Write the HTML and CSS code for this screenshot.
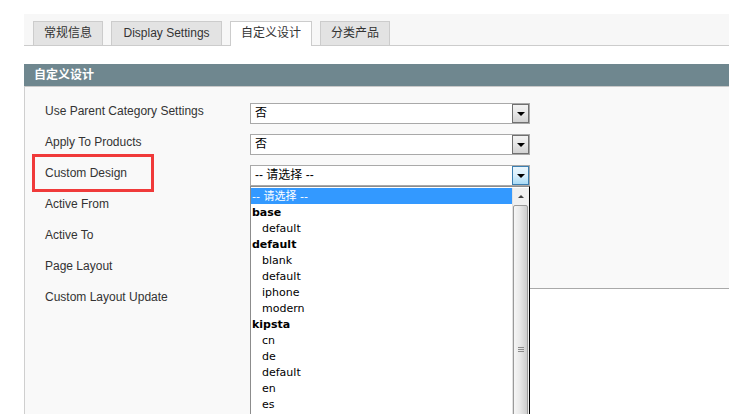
FILE: index.html
```html
<!DOCTYPE html>
<html lang="zh">
<head>
<meta charset="utf-8">
<title>自定义设计</title>
<link rel="stylesheet" href="styles.css">
</head>
<body>
<div class="page">
  <div class="tabs">
    <div class="tab">常规信息</div>
    <div class="tab wide">Display Settings</div>
    <div class="tab active">自定义设计</div>
    <div class="tab">分类产品</div>
  </div>
  <div class="section">
    <div class="section-head">自定义设计</div>
    <div class="panel">
      <div class="form">
        <div class="label">Use Parent Category Settings</div>
        <div class="select"><span class="value">否</span><span class="btn"><i class="tri"></i></span></div>

        <div class="label">Apply To Products</div>
        <div class="select"><span class="value">否</span><span class="btn"><i class="tri"></i></span></div>

        <div class="label marked">Custom Design<span class="mark"></span></div>
        <div class="select focused"><span class="value">-- 请选择 --</span><span class="btn"><i class="tri"></i></span>
          <div class="listbox">
            <div class="options">
              <div class="opt selected">-- 请选择 --</div>
              <div class="opt group">base</div>
              <div class="opt child">default</div>
              <div class="opt group">default</div>
              <div class="opt child">blank</div>
              <div class="opt child">default</div>
              <div class="opt child">iphone</div>
              <div class="opt child">modern</div>
              <div class="opt group">kipsta</div>
              <div class="opt child">cn</div>
              <div class="opt child">de</div>
              <div class="opt child">default</div>
              <div class="opt child">en</div>
              <div class="opt child">es</div>
            </div>
            <div class="sb">
              <div class="sb-up"><i class="uptri"></i></div>
              <div class="sb-thumb"><span class="grip"></span></div>
            </div>
          </div>
        </div>

        <div class="label">Active From</div>
        <div class="empty"></div>

        <div class="label">Active To</div>
        <div class="empty"></div>

        <div class="label">Page Layout</div>
        <div class="empty"></div>

        <div class="label">Custom Layout Update</div>
        <div class="empty"></div>
      </div>
    </div>
  </div>
</div>
</body>
</html>
```

FILE: styles.css
```css
html, body {
  margin: 0;
  height: 100%;
  overflow: hidden;
  background: #ffffff;
}

body {
  font-family: "Liberation Sans", Arial, "Noto Sans CJK SC", sans-serif;
  font-size: 12px;
  color: #333333;
}

.page {
  display: flex;
  flex-direction: column;
  height: 100%;
  padding: 14px 0 0 24px;
  box-sizing: border-box;
}

.tabs {
  display: flex;
  align-items: flex-end;
  gap: 8px;
  height: 31px;
  padding-left: 9px;
  background: #f7f7f7;
  border-bottom: 1px solid #cccccc;
}

.tab {
  height: 23px;
  line-height: 23px;
  padding: 0 10px;
  background: #e3e3e3;
  border: 1px solid #cccccc;
  border-bottom: none;
  color: #333333;
  white-space: nowrap;
}

.tab.wide {
  padding: 0 11.5px;
}

.tab.active {
  background: #ffffff;
  height: 24px;
  margin-bottom: -1px;
}

.section {
  margin-top: 18px;
  display: flex;
  flex-direction: column;
  flex: 1;
}

.section-head {
  height: 22px;
  line-height: 22px;
  padding-left: 10px;
  background: #6f878f;
  color: #ffffff;
  font-weight: bold;
  border-bottom: 1px solid #c9c9c9;
}

.panel {
  position: relative;
  flex: 1;
  background: #f9f9f9;
  border-left: 1px solid #cfcfcf;
  padding: 16px 0 0 20px;
}

.panel::after {
  content: "";
  position: absolute;
  left: 505px;
  top: 201px;
  right: 0;
  bottom: 0;
  background: #ffffff;
  border-top: 1px solid #a9a9a9;
}

.form {
  display: grid;
  grid-template-columns: 205px 280px;
  grid-auto-rows: 21px;
  row-gap: 10px;
}

.label {
  padding-top: 1px;
  line-height: 15px;
  color: #333333;
  white-space: nowrap;
}

.marked {
  position: relative;
}

.mark {
  position: absolute;
  left: -13px;
  top: -11px;
  width: 122px;
  height: 38px;
  box-sizing: border-box;
  border: 3px solid #f03a3a;
}

.select {
  position: relative;
  height: 21px;
  box-sizing: border-box;
  background: #ffffff;
  border: 1px solid #a9a9a9;
  line-height: 19px;
  padding-left: 4px;
  color: #000000;
}

.btn {
  position: absolute;
  right: 0;
  top: 0;
  bottom: 0;
  width: 17px;
  box-sizing: border-box;
  border: 1px solid #707070;
  background: linear-gradient(#f3f3f3, #e6e6e6 50%, #d2d2d2);
  display: flex;
  align-items: center;
  justify-content: center;
}

.focused .btn {
  border-color: #3c7fb1;
  background: linear-gradient(#eaf6fd, #d9effc 50%, #a9dbf6);
}

.tri {
  width: 0;
  height: 0;
  border-left: 4px solid transparent;
  border-right: 4px solid transparent;
  border-top: 4px solid #000000;
  margin-top: 1px;
}

.listbox {
  position: absolute;
  z-index: 5;
  left: -1px;
  top: calc(100% + 1px);
  width: 280px;
  height: 232px;
  box-sizing: border-box;
  background: #ffffff;
  border: 1px solid #8c8c8c;
  border-right-color: #000000;
  border-bottom: none;
  padding-top: 1px;
  display: flex;
  overflow: hidden;
}

.options {
  flex: 1;
  font-family: "DejaVu Sans", Tahoma, "Noto Sans CJK SC", sans-serif;
  font-size: 11px;
  color: #000000;
}

.opt {
  height: 16px;
  line-height: 17px;
  padding-left: 1px;
  white-space: nowrap;
}

.opt.selected {
  background: #3399ff;
  color: #ffffff;
}

.opt.group {
  font-weight: bold;
}

.opt.child {
  padding-left: 11px;
}

.sb {
  width: 17px;
  background: #f0f0f0;
  border-left: 1px solid #e2e2e2;
  box-sizing: border-box;
  display: flex;
  flex-direction: column;
}

.sb-up {
  height: 16px;
  flex: none;
  display: flex;
  align-items: center;
  justify-content: center;
}

.uptri {
  width: 0;
  height: 0;
  border-left: 3px solid transparent;
  border-right: 3px solid transparent;
  border-bottom: 3px solid #404040;
}

.sb-thumb {
  position: relative;
  flex: none;
  height: 300px;
  margin: 1px 1px 0 0;
  box-sizing: border-box;
  border: 1px solid #9a9a9a;
  border-radius: 2px;
  background: linear-gradient(to right, #f6f6f6, #e9e9e9 45%, #cdcdcd);
}

.grip {
  position: absolute;
  left: 4px;
  top: 141px;
  width: 6px;
  height: 5px;
  background: repeating-linear-gradient(#8a8a8a 0 1px, transparent 1px 2px);
}
```
